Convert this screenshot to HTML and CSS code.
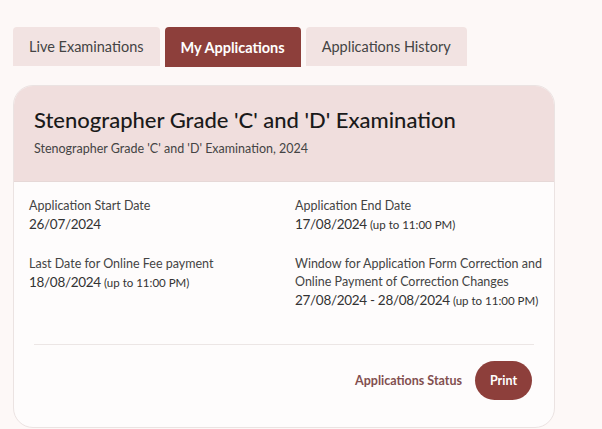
FILE: index.html
```html
<!DOCTYPE html>
<html>
<head>
<meta charset="utf-8">
<link rel="stylesheet" href="styles.css">
</head>
<body>
<div class="page">
  <div class="tabs">
    <div class="tab">Live Examinations</div>
    <div class="tab active">My Applications</div>
    <div class="tab">Applications History</div>
  </div>
  <div class="card">
    <div class="card-head">
      <h1 class="title">Stenographer Grade 'C' and 'D' Examination</h1>
      <div class="subtitle">Stenographer Grade 'C' and 'D' Examination, 2024</div>
    </div>
    <div class="card-body">
      <div class="grid">
        <div class="item">
          <div class="label">Application Start Date</div>
          <div class="value">26/07/2024</div>
        </div>
        <div class="item">
          <div class="label">Application End Date</div>
          <div class="value">17/08/2024 <span class="note">(up to 11:00 PM)</span></div>
        </div>
        <div class="item">
          <div class="label">Last Date for Online Fee payment</div>
          <div class="value">18/08/2024 <span class="note">(up to 11:00 PM)</span></div>
        </div>
        <div class="item">
          <div class="label">Window for Application Form Correction and Online Payment of Correction Changes</div>
          <div class="value">27/08/2024 - 28/08/2024 <span class="note">(up to 11:00 PM)</span></div>
        </div>
      </div>
      <div class="footer">
        <span class="status">Applications Status</span>
        <button class="print">Print</button>
      </div>
    </div>
  </div>
</div>
</body>
</html>
```
FILE: styles.css
```css
html, body {
  margin: 0;
  padding: 0;
  background: #fdf8f7;
  font-family: Lato, "Noto Sans", sans-serif;
  color: #333;
}
.page {
  padding: 27px 0 0 13px;
}
.tabs {
  display: flex;
  gap: 5px;
  align-items: flex-start;
}
.tab {
  height: 39px;
  padding: 0 16px;
  display: flex;
  align-items: center;
  background: #f2e3e2;
  border-radius: 4px 4px 0 0;
  font-size: 14.5px;
  color: #444;
  box-sizing: border-box;
}
.tab.active {
  background: #8d3f3b;
  color: #fff;
  font-weight: 700;
  height: 40px;
}
.card {
  margin-top: 18px;
  width: 542px;
  height: 343px;
  box-sizing: border-box;
  border: 1px solid #ebe3e2;
  border-radius: 20px;
  background: #fefcfc;
  overflow: hidden;
  display: flex;
  flex-direction: column;
}
.card-head {
  background: #f0dedd;
  padding: 20px 20px 0 20px;
  height: 96px;
  flex: none;
  box-sizing: border-box;
  border-bottom: 1px solid #e6d8d7;
}
.title {
  margin: 0;
  font-size: 22px;
  font-weight: 500;
  color: #1a1a1a;
  line-height: 28px;
}
.subtitle {
  margin-top: 7px;
  font-size: 12.5px;
  color: #444;
}
.card-body {
  padding: 15px 0 0 15px;
}
.grid {
  display: grid;
  grid-template-columns: 266px 1fr;
  row-gap: 21px;
}
.label {
  font-size: 12.5px;
  color: #444;
  line-height: 18px;
}
.value {
  font-size: 13.5px;
  letter-spacing: -0.3px;
  color: #333;
  line-height: 18px;
  white-space: nowrap;
}
.note {
  font-size: 11.5px;
  letter-spacing: 0;
}
.footer {
  margin: 34px 20px 0 5px;
  border-top: 1px solid #ece6e5;
  display: flex;
  justify-content: flex-end;
  align-items: center;
  gap: 13px;
  padding-top: 16px;
}
.status {
  font-size: 12.5px;
  font-weight: 700;
  color: #824f4f;
}
.print {
  height: 39px;
  width: 57px;
  border: none;
  border-radius: 20px;
  background: #8d3f3b;
  color: #fff;
  font-family: inherit;
  font-weight: 700;
  font-size: 12.5px;
  margin-right: 2px;
}
```
